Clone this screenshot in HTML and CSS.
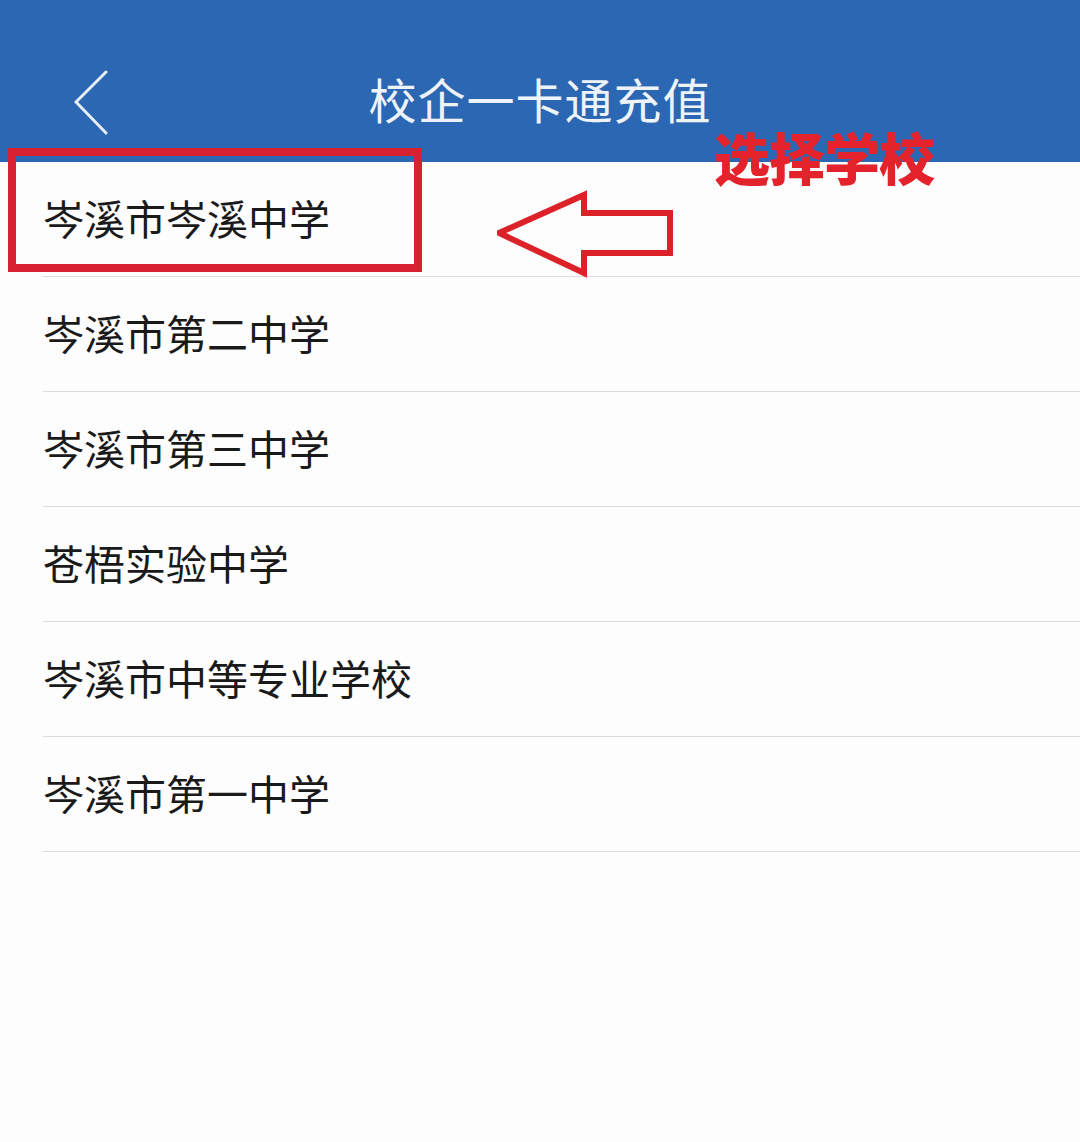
FILE: index.html
```html
<!DOCTYPE html>
<html lang="zh-CN">
<head>
<meta charset="utf-8">
<title>校企一卡通充值</title>
<link rel="stylesheet" href="styles.css">
</head>
<body>
<div class="page">
  <header class="topbar">
    <div class="back">
      <svg class="back-icon" width="40" height="70" viewBox="0 0 40 70">
        <polyline points="32,3 2,33 32,64" fill="none" stroke="#e6eef8" stroke-width="3" stroke-linecap="round" stroke-linejoin="miter"/>
      </svg>
    </div>
    <h1 class="title">校企一卡通充值</h1>
    <div class="spacer"></div>
  </header>
  <ul class="school-list">
    <li class="school">岑溪市岑溪中学</li>
    <li class="school">岑溪市第二中学</li>
    <li class="school">岑溪市第三中学</li>
    <li class="school">苍梧实验中学</li>
    <li class="school">岑溪市中等专业学校</li>
    <li class="school">岑溪市第一中学</li>
  </ul>

  <div class="mark-box"></div>
  <svg class="mark-arrow" width="190" height="100" viewBox="0 0 190 100">
    <polygon points="2,53 87,15 87,33 173,33 173,73 87,73 87,93" fill="none" stroke="#dd2129" stroke-width="6" stroke-linejoin="miter"/>
  </svg>
  <div class="mark-text">选择学校</div>
</div>
</body>
</html>
```

FILE: styles.css
```css
html, body {
  margin: 0;
  padding: 0;
  background: #fdfdfd;
}

body {
  font-family: "Noto Sans CJK SC", "Noto Sans", sans-serif;
  color: #1a1a1a;
}

.page {
  position: relative;
  width: 1080px;
  height: 1142px;
  overflow: hidden;
}

.topbar {
  height: 162px;
  background: #2b67b2;
  display: grid;
  grid-template-columns: 1fr auto 1fr;
  align-items: center;
}

.back {
  padding-left: 74px;
  padding-top: 46px;
  display: flex;
  align-items: center;
}

.back-icon {
  display: block;
}

.title {
  margin: 0;
  padding-top: 34px;
  font-size: 48px;
  font-weight: 400;
  letter-spacing: 1px;
  color: #eef3fa;
  line-height: 1;
}

.school-list {
  list-style: none;
  margin: 0;
  padding: 0 0 0 43px;
}

.school {
  height: 110px;
  border-bottom: 1px solid #dcdcdc;
  display: flex;
  align-items: center;
  font-size: 41px;
  line-height: 1;
  letter-spacing: 0;
  padding-bottom: 4px;
}

.mark-box {
  position: absolute;
  left: 8px;
  top: 148px;
  width: 398px;
  height: 108px;
  border: 8px solid #d72030;
}

.mark-arrow {
  position: absolute;
  left: 497px;
  top: 180px;
}

.mark-text {
  position: absolute;
  left: 714px;
  top: 122px;
  font-size: 56px;
  font-weight: 900;
  line-height: 1.2;
  color: #e3222b;
  letter-spacing: -1px;
}
```
